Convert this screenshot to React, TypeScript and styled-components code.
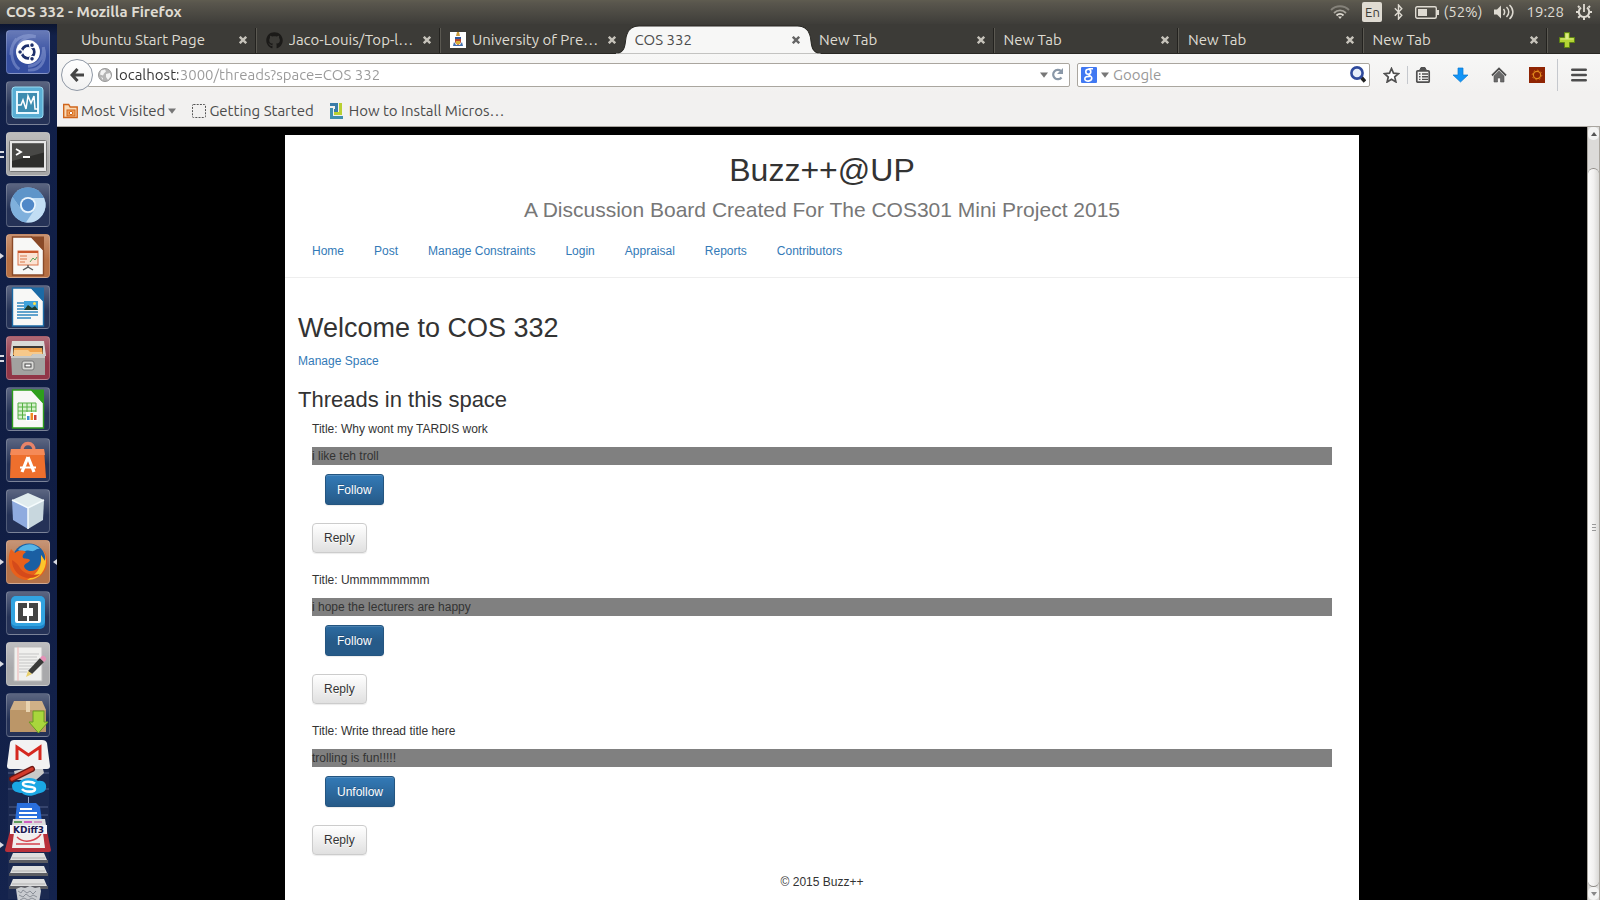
import React from "react";
import styled, { createGlobalStyle, css } from "styled-components";
import { FaGithub } from "react-icons/fa";

const GlobalStyle = createGlobalStyle`
  * { box-sizing: border-box; }
  body { margin: 0; background: #000; }
  button, input { font-family: inherit; font-size: inherit; margin: 0; }
  svg { display: block; flex: none; }
`;

const Desktop = styled.div`
  height: 100vh;
  display: flex;
  flex-direction: column;
  overflow: hidden;
  font-family: "Ubuntu", "Noto Sans", sans-serif;
  font-size: 15px;
  line-height: 20px;
  color: #3c3c3c;
`;

/* ---------- system panel ---------- */

const Panel = styled.header`
  flex: none;
  height: 24px;
  display: flex;
  align-items: center;
  justify-content: space-between;
  padding: 0 8px 0 6px;
  background: linear-gradient(#5f5c50 0, #59564d 3px, #3e3d39 24px);
  color: #dfdbd2;
`;

const WindowTitle = styled.div`
  font-weight: 700;
`;

const Indicators = styled.div`
  display: flex;
  align-items: center;
`;

const Indicator = styled.div`
  display: flex;
  align-items: center;
  gap: 4px;
  margin-left: 12px;
`;

const Language = styled.span`
  width: 20px;
  height: 20px;
  border-radius: 2px;
  background: #dfdbd2;
  color: #3c3b37;
  font-size: 13px;
  text-align: center;
`;

const Workspace = styled.div`
  flex: 1;
  min-height: 0;
  display: flex;
`;

/* ---------- launcher ---------- */

const Launcher = styled.aside`
  flex: none;
  width: 57px;
  padding: 6px 7px 0 6px;
  overflow: hidden;
  display: flex;
  flex-direction: column;
  gap: 7px;
  background: linear-gradient(#0b1530 0, #12214a 12px, #101d43 50%, #14234d 100%);
`;

const Tile = styled.button<{ $bg?: string }>`
  position: relative;
  flex: none;
  width: 44px;
  height: 44px;
  padding: 0;
  display: flex;
  align-items: center;
  justify-content: center;
  border: 1px solid rgba(255, 255, 255, 0.2);
  border-radius: 4px;
  background: linear-gradient(rgba(255, 255, 255, 0.28), rgba(255, 255, 255, 0.04) 60%),
    ${(p) => p.$bg ?? "#1c2a50"};
`;

const Marker = styled.span<{ $kind: "one" | "two" | "focus" }>`
  position: absolute;
  top: 18px;
  ${(p) =>
    p.$kind === "one" &&
    css`
      left: -7px;
      border: 3px solid transparent;
      border-left: 4px solid #d8dae2;
      border-right: 0;
    `}
  ${(p) =>
    p.$kind === "two" &&
    css`
      left: -7px;
      width: 4px;
      height: 7px;
      border-top: 2px solid #d8dae2;
      border-bottom: 2px solid #d8dae2;
    `}
  ${(p) =>
    p.$kind === "focus" &&
    css`
      right: -8px;
      border: 3px solid transparent;
      border-right: 4px solid #d8dae2;
      border-left: 0;
    `}
`;

const FoldedStack = styled.div`
  flex: none;
  margin: -5px -6px 0 -6px;
`;

/* ---------- browser chrome ---------- */

const Browser = styled.div`
  flex: 1;
  min-width: 0;
  display: flex;
  flex-direction: column;
`;

const TabStrip = styled.div`
  flex: none;
  height: 30px;
  display: flex;
  padding-left: 15px;
  background: #3c3b37;
  box-shadow: inset 0 -1px 0 #282723;
`;

const Tab = styled.div<{ $active?: boolean; $line?: boolean }>`
  position: relative;
  flex: 1;
  min-width: 0;
  display: flex;
  align-items: center;
  gap: 6px;
  padding: 2px 10px 0 9px;
  color: ${(p) => (p.$active ? "#4c4c4c" : "#dfdbd2")};
  z-index: ${(p) => (p.$active ? 1 : 0)};
  ${(p) =>
    p.$line &&
    css`
      &::after {
        content: "";
        position: absolute;
        top: 4px;
        bottom: 1px;
        right: 0;
        width: 2px;
        background: linear-gradient(90deg, #23221f 50%, #5b5952 50%);
      }
    `}
`;

const ActiveShape = styled.svg`
  position: absolute;
  top: 0;
  left: -11px;
  width: calc(100% + 22px);
  height: 30px;
`;

const TabLabel = styled.span`
  position: relative;
  flex: 1;
  white-space: nowrap;
  overflow: hidden;
`;

const TabClose = styled.button`
  position: relative;
  padding: 0;
  border: 0;
  background: none;
  color: inherit;
`;

const NewTab = styled.button`
  flex: none;
  width: 52px;
  padding: 2px 0 0 11px;
  border: 0;
  background: none;
`;

const Toolbar = styled.div`
  flex: none;
  height: 38px;
  display: flex;
  align-items: center;
  padding: 3px 13px 0 4px;
  background: linear-gradient(#f7f7f6, #f2f1f0);
`;

const BackButton = styled.button`
  position: relative;
  z-index: 1;
  flex: none;
  width: 32px;
  height: 32px;
  padding: 0;
  display: flex;
  align-items: center;
  justify-content: center;
  border: 1px solid #8f98a5;
  border-radius: 50%;
  background: linear-gradient(#fff, #f1f1f1);
`;

const Field = styled.div<{ $search?: boolean }>`
  height: 24px;
  min-width: 0;
  display: flex;
  align-items: center;
  border: 1px solid #aaa69f;
  background: #fff;
  ${(p) =>
    p.$search
      ? css`
          flex: 0 1 293px;
          margin-left: 7px;
          padding: 0 3px;
          border-radius: 2px;
          gap: 4px;
        `
      : css`
          flex: 1;
          margin-left: -5px;
          padding: 0 4px 0 9px;
          border-radius: 0 2px 2px 0;
          gap: 3px;
        `}
`;

const Address = styled.input`
  flex: 1;
  min-width: 0;
  padding: 0;
  border: 0;
  outline: 0;
  color: transparent;
  background: linear-gradient(90deg, #333 63px, #999 63px);
  background-clip: text;
  -webkit-background-clip: text;
`;

const SearchInput = styled.input`
  flex: 1;
  min-width: 0;
  padding: 0;
  border: 0;
  outline: 0;
  background: none;
  &::placeholder {
    color: #999;
    opacity: 1;
  }
`;

const IconButton = styled.button`
  flex: none;
  padding: 0;
  border: 0;
  background: none;
`;

const ToolIcons = styled.div`
  flex: none;
  display: flex;
  align-items: center;
  gap: 22px;
  margin-left: 7px;
`;

const BookmarkPair = styled.div`
  display: flex;
  align-items: center;
  gap: 7px;
  margin-left: 6px;
`;

const Divider = styled.span`
  width: 1px;
  height: 18px;
  background: #c5c8cd;
`;

const MenuArea = styled.div`
  display: flex;
  align-items: center;
  gap: 13px;
  margin-left: -10px;
`;

const TallDivider = styled(Divider)`
  height: 32px;
`;

const BookmarksBar = styled.nav`
  flex: none;
  height: 35px;
  display: flex;
  align-items: center;
  padding: 4px 6px 0;
  gap: 16px;
  background: #f2f1f0;
  border-bottom: 1px solid #a9a59f;
`;

const Bookmark = styled.a`
  display: flex;
  align-items: center;
  gap: 3px;
  color: #4c4c4c;
  text-decoration: none;
  white-space: nowrap;
`;

/* ---------- web page ---------- */

const Viewport = styled.div`
  flex: 1;
  min-height: 0;
  display: flex;
  background: #000;
`;

const Canvas = styled.div`
  flex: 1;
  min-width: 0;
  overflow: hidden;
  padding: 8px 16px 0;
`;

const Site = styled.div`
  max-width: 1074px;
  min-height: 100%;
  margin: 0 auto;
  background: #fff;
  color: #333;
  font-family: "Liberation Sans", Arial, sans-serif;
  font-size: 12px;
  line-height: 18px;
`;

const SiteHeader = styled.header`
  padding: 17px 13px 8px;
  border-bottom: 1px solid #eee;
`;

const Brand = styled.h1`
  margin: 0;
  font-size: 32px;
  line-height: 36px;
  font-weight: 400;
  text-align: center;
`;

const Tagline = styled.p`
  margin: 10px 0 11px;
  font-size: 21px;
  line-height: 24px;
  color: #777;
  text-align: center;
`;

const SiteNav = styled.nav`
  display: flex;
  gap: 2px;
`;

const NavLink = styled.a`
  padding: 9px 14px;
  color: #337ab7;
  text-decoration: none;
`;

const SiteMain = styled.main`
  padding: 35px 13px 0;
`;

const SpaceTitle = styled.h2`
  margin: 0 0 8px;
  font-size: 27px;
  line-height: 31px;
  font-weight: 400;
`;

const ManageLink = styled.a`
  display: block;
  color: #337ab7;
  text-decoration: none;
`;

const ThreadsTitle = styled.h3`
  margin: 18px 0 8px;
  font-size: 22px;
  line-height: 24px;
  font-weight: 400;
`;

const Thread = styled.article`
  display: flex;
  flex-direction: column;
  align-items: flex-start;
  padding: 0 14px;
  margin-bottom: 18px;
`;

const ThreadName = styled.p`
  margin: 0 0 9px;
`;

const ThreadBody = styled.p`
  align-self: stretch;
  margin: 0 0 9px;
  background: #808080;
`;

const FollowButton = styled.button<{ $hot?: boolean }>`
  height: 31px;
  margin: 0 0 18px 13px;
  padding: 0 11px;
  border: 1px solid #245580;
  border-radius: 3px;
  color: #fff;
  background: ${(p) =>
    p.$hot ? "linear-gradient(#2d6ca2, #265a88 55%)" : "linear-gradient(#337ab7, #265a88)"};
  text-shadow: 0 -1px 0 rgba(0, 0, 0, 0.2);
  box-shadow: inset 0 1px 0 rgba(255, 255, 255, 0.15), 0 1px 1px rgba(0, 0, 0, 0.08);
`;

const ReplyButton = styled.button`
  height: 30px;
  padding: 0 11px;
  border: 1px solid #ccc;
  border-radius: 4px;
  color: #333;
  background: linear-gradient(#fff, #e0e0e0);
  text-shadow: 0 1px 0 #fff;
  box-shadow: inset 0 1px 0 rgba(255, 255, 255, 0.15), 0 1px 1px rgba(0, 0, 0, 0.08);
`;

const SiteFooter = styled.footer`
  text-align: center;
`;

const Scrollbar = styled.div`
  flex: none;
  width: 13px;
  display: flex;
  flex-direction: column;
  background: #dcdbd9;
  border: solid #aaa69f;
  border-width: 0 1px;
`;

const ScrollStep = styled.button`
  flex: none;
  height: 13px;
  padding: 0;
  display: flex;
  align-items: center;
  justify-content: center;
  border: 0;
  border-radius: 5px;
  background: #f4f4f3;
`;

const ScrollThumb = styled.div`
  flex: 1;
  margin-top: 28px;
  display: flex;
  align-items: center;
  justify-content: center;
  border: solid #8e8b86;
  border-width: 1px 0;
  border-radius: 6px;
  background: linear-gradient(90deg, #fbfbfa, #f2f1f0 50%, #d9d8d5);
`;

/* ---------- drawings ---------- */

const Cross = () => (
  <svg width="8" height="8" viewBox="0 0 8 8" stroke="currentColor" strokeWidth="2.4" opacity=".85">
    <path d="M.8.8l6.4 6.4M7.2.8L.8 7.2" />
  </svg>
);

const Down = ({ color = "#777" }: { color?: string }) => (
  <svg width="8" height="6" viewBox="0 0 8 6">
    <path d="M0 .5h8L4 5.8z" fill={color} />
  </svg>
);

const DocPage = ({ color, children }: { color: string; children: React.ReactNode }) => (
  <svg width="44" height="44" viewBox="0 0 44 44">
    <path d="M6.500 3h19L37.500 16v25h-31z" fill="#f8f8f6" stroke={color} strokeWidth="1.400" />
    <path d="M24.500 2.500H38V17z" fill={color} />
    {children}
  </svg>
);

const DashIcon = () => (
  <svg width="42" height="42" viewBox="0 0 44 44">
    <path d="M4 25C4 8 18 2 30 6c-11-1-20 6-19 17M22 41C37 42 42 28 38 17c1 12-6 19-16 20M10 8C2 18 4 34 13 40" fill="none" stroke="#a9b9e6" strokeWidth="3" opacity=".4" />
    <circle cx="22" cy="22" r="12.500" fill="#fff" />
    <circle cx="22" cy="22" r="6.500" fill="none" stroke="#1d2f6b" strokeWidth="3" />
    <g stroke="#fff" strokeWidth="1.300">
      <path d="M22 22h-9M22 22l4.500-8M22 22l4.500 8" strokeWidth="1" />
      <circle cx="13.700" cy="22" r="2.500" fill="#1d2f6b" />
      <circle cx="26.200" cy="14.800" r="2.500" fill="#1d2f6b" />
      <circle cx="26.200" cy="29.200" r="2.500" fill="#1d2f6b" />
    </g>
    <circle cx="22" cy="22" r="5" fill="#fff" />
  </svg>
);

const MonitorIcon = () => (
  <svg width="44" height="44" viewBox="0 0 44 44">
    <rect x="6" y="6" width="31" height="31" rx="3" fill="#5aaed4" stroke="#9bdcf3" />
    <rect x="11" y="11" width="21" height="21" fill="#3d8cb0" stroke="#e8f8ff" strokeWidth="2" />
    <path d="M12 24h3l2-5 3 9 2-13 3 7 3-7 1 13h3" fill="none" stroke="#fff" strokeWidth="1.500" />
  </svg>
);

const TerminalIcon = () => (
  <svg width="44" height="44" viewBox="0 0 44 44">
    <rect x="3.500" y="8.500" width="37" height="31" rx="1" fill="#e6e6e6" stroke="#777" />
    <rect x="6" y="11.500" width="32" height="24" fill="#2d2d2b" />
    <path d="M6 11.500h32v9L6 29z" fill="#484846" />
    <path d="M10 17l5 3-5 3M17 25h7" fill="none" stroke="#fff" strokeWidth="1.800" />
  </svg>
);

const ChromiumIcon = () => (
  <svg width="44" height="44" viewBox="0 0 44 44">
    <circle cx="22" cy="22" r="17.500" fill="#9fc6e8" />
    <path d="M6.500 14A17.500 17.500 0 0 1 38 15H22a8 8 0 0 0-7.600 10z" fill="#5e95c9" />
    <path d="M6.500 14A17.500 17.500 0 0 0 20 39.400L27 28.500a8 8 0 0 1-12.400-3z" fill="#7fb0dc" />
    <path d="M38 15a17.500 17.500 0 0 1-18 24.400L28.500 27A8 8 0 0 0 24 15z" fill="#c2def4" />
    <circle cx="22" cy="22" r="8" fill="#eaf5fd" />
    <circle cx="22" cy="22" r="6.200" fill="#5088c8" />
  </svg>
);

const ImpressIcon = () => (
  <DocPage color="#8a4a28">
    <rect x="12" y="17" width="20" height="14" fill="#fbe3d3" stroke="#d9744a" />
    <path d="M12 18h20" stroke="#c9572c" strokeWidth="2" />
    <path d="M14 22h7M14 25h7M14 28h5" stroke="#e59a76" strokeWidth="1.600" />
    <path d="M24 28l3-4 2 2 2-3" fill="none" stroke="#5aa35a" />
    <path d="M22 31v2l-5 3M22 33l5 3" fill="none" stroke="#555" strokeWidth="1.400" />
  </DocPage>
);

const WriterIcon = () => (
  <DocPage color="#1b6aa5">
    <path d="M11 18h7M11 21h7M11 24h7M11 27h21M11 30h21M11 33h14" stroke="#2f86c0" strokeWidth="1.600" />
    <rect x="18" y="16" width="14" height="9" fill="#3fa3dc" />
    <path d="M18 25l4-5 4 3 3-2 3 4z" fill="#1f3d2c" />
    <circle cx="28.500" cy="18.500" r="1.500" fill="#ffe14d" />
  </DocPage>
);

const FilesIcon = () => (
  <svg width="44" height="44" viewBox="0 0 44 44">
    <path d="M6 5h32l2 15H4z" fill="#d9d9d6" />
    <path d="M7 10h30v10H7z" fill="#3d3936" />
    <path d="M8 12h28l1 7H7z" fill="#f0a24c" />
    <path d="M8 14h14l2 2h12v4H8z" fill="#f7c98b" />
    <path d="M5 20h20l2-2h12v21H6z" fill="#a2a2a0" />
    <path d="M5 20h20l2-2h12v4H5z" fill="#c9c9c6" />
    <rect x="16" y="25" width="12" height="9" rx="2" fill="#d9d9d6" stroke="#777" />
    <rect x="19" y="28" width="6" height="3" fill="#fff" stroke="#444" />
  </svg>
);

const CalcIcon = () => (
  <DocPage color="#2e9e1c">
    <path d="M12 16h18v16H12z" fill="#d7f0ce" />
    <path d="M12 16h18v16H12zM12 20h18M12 24h18M12 28h18M16.500 16v16M21 16v16M25.500 16v16" fill="none" stroke="#55b043" />
    <path d="M20 25h12v9H20z" fill="#fff" />
    <path d="M21 29h2.500v4H21z" fill="#3c8fd0" />
    <path d="M24.500 26H27v7h-2.500z" fill="#f08a24" />
    <path d="M28 28h2.500v5H28z" fill="#c9443a" />
  </DocPage>
);

const SoftwareIcon = () => (
  <svg width="44" height="44" viewBox="0 0 44 44">
    <path d="M16 13c-1-10 13-10 12 0" fill="none" stroke="#e88368" strokeWidth="3.500" />
    <path d="M5 11h33l2 29H4z" fill="#ee6f2d" />
    <path d="M5 11h33l1 6H4z" fill="#f58a58" />
    <path d="M22 19l-6 15M22 19l6 15" stroke="#fff" strokeWidth="3.200" />
    <path d="M14 29.500h16" stroke="#fff" strokeWidth="2" />
  </svg>
);

const CubeIcon = () => (
  <svg width="44" height="44" viewBox="0 0 44 44">
    <path d="M22 4l16 7-16 8-16-8z" fill="#e1ecee" />
    <path d="M6 11l16 8v21L7 31z" fill="#8fabdf" />
    <path d="M38 11l-16 8v21l15-9z" fill="#c8d7de" />
    <path d="M6 11l16 8 16-8M22 19v21" fill="none" stroke="#f5fbfd" strokeWidth="1.500" />
  </svg>
);

const FirefoxIcon = () => (
  <svg width="44" height="44" viewBox="0 0 44 44">
    <circle cx="23" cy="20" r="16.500" fill="#1a5fa3" />
    <path d="M12 10c5-7 16-8 22-1-4-1-5 3-9 2-4-2-8 2-13-1z" fill="#56b4e6" />
    <path d="M5 9l4 4c4-3 7-3 11-1-3 2-4 4-3 6 2 1 5 0 7 2-1 3-5 3-6 6 1 5 7 6 11 4 5-3 7-9 6-15l4 6c1-4 0-8-2-12 7 9 5 22-4 28-10 6-23 3-28-7C2 23 2 15 5 9z" fill="#e8601c" />
    <path d="M37 9c5 9 4 20-4 27-4 3-8 4-12 4 9-5 14-12 14-20l0-5 4 6c1-4 0-8-2-12z" fill="#fbc52c" />
    <path d="M6 20c0 10 7 18 18 18 4 0 8-2 10-4-8 2-16 0-20-6-2-4-5-6-8-8z" fill="#d54a1a" />
  </svg>
);

const BracketsIcon = () => (
  <svg width="44" height="44" viewBox="0 0 44 44">
    <rect x="5" y="5" width="34" height="33" rx="5" fill="#1d84c9" />
    <rect x="5" y="5" width="34" height="30" rx="5" fill="#32a3e0" />
    <rect x="9" y="10" width="26" height="22" rx="2" fill="#fff" />
    <path d="M12 12h9v5h-4v8h4v5h-9zM32 12h-9v5h4v8h-4v5h9z" fill="#444" />
  </svg>
);

const EditorIcon = () => (
  <svg width="44" height="44" viewBox="0 0 44 44">
    <path d="M8 5h28v34H8z" fill="#f0f0ee" stroke="#bbb" />
    <path d="M12 5v34" stroke="#efb3b3" />
    <path d="M13 12h20M13 15h18M13 18h20M13 21h17M13 24h14M13 27h16M13 30h8" stroke="#c5c5c5" />
    <path d="M22 29L34 16l4 4-12 12z" fill="#3a3a38" />
    <path d="M34 16l2-2c2-1 5 2 4 4l-2 2z" fill="#e792b8" />
    <path d="M22 29l4 3-6 3z" fill="#e9cf6a" />
  </svg>
);

const ArchiveIcon = () => (
  <svg width="44" height="44" viewBox="0 0 44 44">
    <path d="M8 8h28l4 9H4z" fill="#cfb087" />
    <path d="M4 17h36v22H4z" fill="#bb9668" />
    <path d="M20 8h4v11h-4z" fill="#e8d3b0" />
    <path d="M27 18h11v11h4L32.500 40 23 29h4z" fill="#a9d63c" stroke="#6b9c22" />
  </svg>
);

const StackArt = () => (
  <svg width="57" height="164" viewBox="0 0 57 164">
    <path d="M8 30h41v130H8z" fill="#1b2950" />
    <path d="M8 34h41M8 50h41M9 68h39M9 76h39" stroke="#526089" />
    <path d="M14 32l28-6 2 8-8 7H16z" fill="#c9c9c9" />
    <path d="M10 4c0-2 2-3 4-3h28c3 0 4 1 5 3l3 23c0 2-1 3-3 3H10c-2 0-3-1-3-3z" fill="#f2f2f2" />
    <path d="M17 21V8l11.500 8L40 8v13" fill="none" stroke="#d5281f" strokeWidth="3" />
    <path d="M12 40l20-10" stroke="#6d1712" strokeWidth="6" strokeLinecap="round" />
    <path d="M12 40l20-10" stroke="#d23a2a" strokeWidth="3.500" strokeLinecap="round" />
    <path d="M12 47c0-4 5-5 7-4 5-5 15-5 19-1 6-1 9 3 8 7 0 4-6 5-9 6-6 3-12 2-15-1-5 0-10-2-10-7z" fill="#1aa7e4" />
    <path d="M35 44.500c-3-2.500-12-2.500-12 .5 0 4 12 1.500 12 5 0 3.500-10 3.500-13 0" fill="none" stroke="#fff" strokeWidth="2.600" />
    <path d="M28.500 58v10" stroke="#9aa7c8" />
    <path d="M17 64h19l4 4 2 15H15z" fill="#2a6fdd" />
    <path d="M20 70h12M19 74h18M19 78h18" stroke="#fff" strokeWidth="1.800" />
    <path d="M13 80h32l1 6H12z" fill="#ddd" />
    <path d="M14 83h8" stroke="#5d9c5d" strokeWidth="2" />
    <path d="M24 83h8" stroke="#d060c0" strokeWidth="2" />
    <path d="M34 83h8" stroke="#d09ac0" strokeWidth="2" />
    <path d="M10 92h37l4 19c0 2-2 2-3 2H8c-1 0-3 0-3-2z" fill="#b8303a" />
    <path d="M14 94h29l2 15H12z" fill="#f1efee" />
    <path d="M17 98c8 8 20 3 24-3M16 105h24" fill="none" stroke="#d4424c" strokeWidth="1.400" />
    <path d="M10 86h37v9H10z" fill="#f5f3f8" />
    <text x="28.500" y="94" textAnchor="middle" fontFamily="DejaVu Sans, sans-serif" fontSize="9" fontWeight="700" fill="#1c1850">KDiff3</text>
    <path d="M0 103l4 3-4 3z" fill="#d8dae2" />
    {[114, 127, 140].map((y) => (
      <g key={y}>
        <path d={`M13 ${y}h31l3 7H10z`} fill="#dedede" />
        <path d={`M9 ${y + 7}h39v3H9z`} fill="#5c5d63" />
        <path d={`M12 ${y + 5}h33`} stroke="#b0b0b0" />
      </g>
    ))}
    <path d="M16 150l5-2 4 1 5-2 5 2 5-1 1 4-2 12H18z" fill="#c9ccd0" />
    <path d="M18 152l3 2 2-3 4 3 3-2 3 3 3-3M19 156l4 2 3-3 4 3 3-2 4 2M20 161l4-2 4 2 4-2 4 2" fill="none" stroke="#8b9098" />
  </svg>
);

type AppTile = {
  name: string;
  icon: React.ReactNode;
  bg?: string;
  mark?: "one" | "two";
  focus?: boolean;
};

const apps: AppTile[] = [
  { name: "Search", icon: <DashIcon />, bg: "#2d479c" },
  { name: "System Monitor", icon: <MonitorIcon /> },
  { name: "Terminal", icon: <TerminalIcon />, bg: "#a3a3a3", mark: "two" },
  { name: "Chromium", icon: <ChromiumIcon /> },
  { name: "Impress", icon: <ImpressIcon />, bg: "#b3693b", mark: "one" },
  { name: "Writer", icon: <WriterIcon /> },
  { name: "Files", icon: <FilesIcon />, bg: "#8d2e40", mark: "two" },
  { name: "Calc", icon: <CalcIcon /> },
  { name: "Software Centre", icon: <SoftwareIcon /> },
  { name: "NetBeans", icon: <CubeIcon /> },
  { name: "Firefox", icon: <FirefoxIcon />, bg: "#b06c42", mark: "one", focus: true },
  { name: "Brackets", icon: <BracketsIcon /> },
  { name: "Text Editor", icon: <EditorIcon />, bg: "#a5a5a8", mark: "one" },
  { name: "Package Installer", icon: <ArchiveIcon /> },
];

const CrestIcon = () => (
  <svg width="16" height="16" viewBox="0 0 16 16">
    <path d="M0 0h16v16H0z" fill="#fff" />
    <path d="M7 0h2l1 4H6z" fill="#c99a3c" />
    <path d="M5 5h6v4c0 2-1 3-3 4-2-1-3-2-3-4z" fill="#b5482e" />
    <path d="M5 5h6v2H5z" fill="#31569b" />
    <path d="M4 10l-1 4h10l-1-4-2 3H6z" fill="#3f6fae" />
    <path d="M6 9h4v3H6z" fill="#d9b23a" />
  </svg>
);

const tabs = [
  { label: "Ubuntu Start Page" },
  { label: "Jaco-Louis/Top-l…", icon: <FaGithub size={17} color="#1b1a18" /> },
  { label: "University of Pre…", icon: <CrestIcon /> },
  { label: "COS 332", active: true },
  { label: "New Tab" },
  { label: "New Tab" },
  { label: "New Tab" },
  { label: "New Tab" },
];

const navLinks = ["Home", "Post", "Manage Constraints", "Login", "Appraisal", "Reports", "Contributors"];

const threads = [
  { title: "Why wont my TARDIS work", body: "i like teh troll", action: "Follow" },
  { title: "Ummmmmmmm", body: "i hope the lecturers are happy", action: "Follow", hot: true },
  { title: "Write thread title here", body: "trolling is fun!!!!!", action: "Unfollow" },
];

function SystemPanel() {
  return (
    <Panel>
      <WindowTitle>COS 332 - Mozilla Firefox</WindowTitle>
      <Indicators>
        <Indicator>
          <svg width="20" height="14" viewBox="0 0 20 14" fill="none" strokeWidth="1.800">
            <path d="M1 5c5-5 13-5 18 0" stroke="#85827a" />
            <path d="M4 8c3.500-3.500 8.500-3.500 12 0" stroke="#a8a59c" />
            <path d="M6.500 10.500c2-2 5-2 7 0" stroke="#dfdbd2" />
            <path d="M8 11.500h4l-2 2.500z" fill="#dfdbd2" />
          </svg>
        </Indicator>
        <Indicator>
          <Language>En</Language>
        </Indicator>
        <Indicator>
          <svg width="9" height="16" viewBox="0 0 9 16" fill="none" stroke="#dfdbd2" strokeWidth="1.400">
            <path d="M.8 4.200l7 7L4.500 15V1l3.300 3.800-7 7" />
          </svg>
        </Indicator>
        <Indicator>
          <svg width="24" height="13" viewBox="0 0 24 13">
            <rect x=".7" y=".7" width="20.600" height="11.600" rx="1.500" fill="none" stroke="#dfdbd2" strokeWidth="1.400" />
            <path d="M3 3h9v7H3zM22 4h2v5h-2z" fill="#dfdbd2" />
          </svg>
          <span>(52%)</span>
        </Indicator>
        <Indicator>
          <svg width="20" height="16" viewBox="0 0 20 16" fill="none" stroke="#dfdbd2" strokeWidth="1.500">
            <path d="M0 5.500h3l4-4v13l-4-4H0z" fill="#dfdbd2" stroke="none" />
            <path d="M9.500 5c1.500 2 1.500 4 0 6M12.500 3c3 3 3 7 0 10M15.500 1c4.500 4 4.500 10 0 14" />
          </svg>
        </Indicator>
        <Indicator>
          <span>19:28</span>
        </Indicator>
        <Indicator>
          <svg width="16" height="16" viewBox="0 0 16 16" fill="none" stroke="#dfdbd2">
            <path d="M5 3.600a5.200 5.200 0 1 0 6 0" strokeWidth="2" />
            <path d="M8 0v8" strokeWidth="1.800" />
            <path d="M3.500 3.500L2 2M12.500 3.500L14 2M2.500 8H0M13.500 8H16M4 12l-1.800 1.800M12 12l1.800 1.800M8 13.500V16" strokeWidth="2" />
          </svg>
        </Indicator>
      </Indicators>
    </Panel>
  );
}

function Tabs() {
  return (
    <TabStrip>
      {tabs.map((t, i) => (
        <Tab key={i} $active={t.active} $line={!t.active && !tabs[i + 1]?.active}>
          {t.active && (
            <ActiveShape viewBox="0 0 206 30" preserveAspectRatio="none">
              <path d="M0 30C13 29 9 16 12 10c2-6 6-8 12-8h158c6 0 10 2 12 8 3 6-1 19 12 20z" fill="#f7f7f6" stroke="#282723" />
              <path d="M1 29.500h204V31H1z" fill="#f7f7f6" />
            </ActiveShape>
          )}
          {t.icon}
          <TabLabel>{t.label}</TabLabel>
          <TabClose aria-label="Close tab">
            <Cross />
          </TabClose>
        </Tab>
      ))}
      <NewTab aria-label="Open a new tab">
        <svg width="16" height="16" viewBox="0 0 16 16">
          <path d="M5.500.5h5v5h5v5h-5v5h-5v-5h-5v-5h5z" fill="#b4d335" stroke="#5f8413" />
          <path d="M6.500 1.500h3v5h5v1h-13v-1h5z" fill="#dcec86" />
        </svg>
      </NewTab>
    </TabStrip>
  );
}

function NavigationBar() {
  return (
    <Toolbar>
      <BackButton aria-label="Back">
        <svg width="14" height="14" viewBox="0 0 14 14" fill="none" stroke="#454545" strokeWidth="3">
          <path d="M7.500 1L2 7l5.500 6M2 7h12" />
        </svg>
      </BackButton>
      <Field>
        <svg width="14" height="14" viewBox="0 0 14 14">
          <circle cx="7" cy="7" r="6.500" fill="#b5b5b5" stroke="#999" />
          <path d="M3 2.500l4-1 1 2-2 2-1 2-3-1zM8 6l4-1 1 3-3 4-2-3zM3 9l2 1v2z" fill="#f3f3f3" />
        </svg>
        <Address aria-label="Address" defaultValue="localhost:3000/threads?space=COS 332" />
        <Down />
        <IconButton aria-label="Reload">
          <svg width="14" height="13" viewBox="0 0 14 13">
            <path d="M10.500 9.500A4.700 4.700 0 1 1 10 3" fill="none" stroke="#8a98a8" strokeWidth="2.200" />
            <path d="M12 0v6H6z" fill="#8a98a8" />
          </svg>
        </IconButton>
      </Field>
      <Field as="form" $search>
        <svg width="16" height="16" viewBox="0 0 16 16">
          <rect width="16" height="16" rx="1" fill="#4078f2" />
          <g fill="none" stroke="#fff" strokeWidth="1.600">
            <circle cx="7.300" cy="4.800" r="2.500" />
            <path d="M12 1.800H7.500M8.500 7.300c-2 1.200 2.300 1.200 2.300 3.800 0 4-7 3.800-7 .8 0-2 2.500-2.600 5-2.500" />
          </g>
        </svg>
        <Down />
        <SearchInput aria-label="Search" placeholder="Google" />
        <IconButton type="button" aria-label="Go">
          <svg width="16" height="17" viewBox="0 0 16 17">
            <path d="M11 11l4 4.500" stroke="#222" strokeWidth="3.600" />
            <circle cx="7" cy="7" r="5.600" fill="#e8effa" stroke="#2f4a9c" strokeWidth="2.600" />
          </svg>
        </IconButton>
      </Field>
      <ToolIcons>
        <BookmarkPair>
          <IconButton aria-label="Bookmark this page">
            <svg width="17" height="16" viewBox="0 0 17 16">
              <path d="M8.500 1.500l2 4.600 5 .5-3.800 3.300 1.200 5-4.400-2.700L4.100 15l1.200-5L1.500 6.600l5-.5z" fill="#fff" stroke="#505050" strokeWidth="1.700" />
            </svg>
          </IconButton>
          <Divider />
          <IconButton aria-label="Bookmarks">
            <svg width="16" height="16" viewBox="0 0 16 16" fill="none" stroke="#505050">
              <rect x="1.800" y="3.800" width="12.400" height="11.400" rx="1" strokeWidth="1.700" />
              <path d="M4.500 3.500l1.500-3h4l1.500 3z" fill="#505050" />
              <path d="M4 7h1.500M7 7h6M4 9.700h1.500M7 9.700h6M4 12.400h1.500M7 12.400h6" strokeWidth="1.400" />
            </svg>
          </IconButton>
        </BookmarkPair>
        <IconButton aria-label="Downloads">
          <svg width="16" height="16" viewBox="0 0 16 16">
            <path d="M5 1h5v7h5l-7.500 7L0 8h5z" fill="#1294f6" stroke="#0b7ad0" strokeWidth=".7" />
          </svg>
        </IconButton>
        <IconButton aria-label="Home">
          <svg width="16" height="16" viewBox="0 0 16 16">
            <path d="M1 8.500l7-7 7 7" fill="none" stroke="#505050" strokeWidth="1.800" />
            <path d="M3 9l5-5 5 5v6H9.500v-4h-3v4H3z" fill="#6a6a6a" stroke="#505050" strokeWidth=".6" />
          </svg>
        </IconButton>
        <IconButton aria-label="Extension">
          <svg width="16" height="16" viewBox="0 0 16 16">
            <path d="M0 0h16v16H0z" fill="#8f2403" />
            <circle cx="8" cy="8" r="3.600" fill="none" stroke="#e08a1c" strokeWidth="1.200" />
            <circle cx="8" cy="8" r="4.800" fill="none" stroke="#d97a18" strokeDasharray="1.500 2.200" />
          </svg>
        </IconButton>
        <MenuArea>
          <TallDivider />
          <IconButton aria-label="Menu">
            <svg width="16" height="14" viewBox="0 0 16 14" stroke="#4d4d4d" strokeWidth="2.600" strokeLinecap="round">
              <path d="M1.300 1.800h13.400M1.300 7h13.400M1.300 12.200h13.400" />
            </svg>
          </IconButton>
        </MenuArea>
      </ToolIcons>
    </Toolbar>
  );
}

function Bookmarks() {
  return (
    <BookmarksBar>
      <Bookmark href="#">
        <svg width="15" height="16" viewBox="0 0 15 16" fill="none" stroke="#d0651b">
          <path d="M.7 14.500V1.500h5l1.500 2.500h7v10.500z" fill="#f9d9b4" strokeWidth="1.400" />
          <rect x="4" y="7" width="8" height="6" fill="#f1a35c" />
          <circle cx="8" cy="10" r="1.700" fill="#fff" />
        </svg>
        Most Visited
        <Down />
      </Bookmark>
      <Bookmark href="#">
        <svg width="14" height="14" viewBox="0 0 14 14">
          <rect x=".5" y=".5" width="13" height="13" rx="1" fill="none" stroke="#555" strokeDasharray="2 1.200" />
        </svg>
        Getting Started
      </Bookmark>
      <Bookmark href="#">
        <svg width="16" height="16" viewBox="0 0 16 16">
          <path d="M0 0h8v9H4V6h1V3H0z" fill="#3a7ca8" />
          <path d="M9 0h3v12H4V9h5z" fill="#b9d032" />
          <path d="M0 5h3v8h10v3H0z" fill="#3f8fae" />
        </svg>
        How to Install Micros…
      </Bookmark>
    </BookmarksBar>
  );
}

export default function App() {
  return (
    <Desktop>
      <GlobalStyle />
      <SystemPanel />
      <Workspace>
        <Launcher>
          {apps.map((a) => (
            <Tile key={a.name} $bg={a.bg} aria-label={a.name}>
              {a.icon}
              {a.mark && <Marker $kind={a.mark} />}
              {a.focus && <Marker $kind="focus" />}
            </Tile>
          ))}
          <FoldedStack>
            <StackArt />
          </FoldedStack>
        </Launcher>
        <Browser>
          <Tabs />
          <NavigationBar />
          <Bookmarks />
          <Viewport>
            <Canvas>
              <Site>
                <SiteHeader>
                  <Brand>Buzz++@UP</Brand>
                  <Tagline>A Discussion Board Created For The COS301 Mini Project 2015</Tagline>
                  <SiteNav>
                    {navLinks.map((l) => (
                      <NavLink key={l} href="#">{l}</NavLink>
                    ))}
                  </SiteNav>
                </SiteHeader>
                <SiteMain>
                  <SpaceTitle>Welcome to COS 332</SpaceTitle>
                  <ManageLink href="#">Manage Space</ManageLink>
                  <ThreadsTitle>Threads in this space</ThreadsTitle>
                  {threads.map((t) => (
                    <Thread key={t.title}>
                      <ThreadName>Title: {t.title}</ThreadName>
                      <ThreadBody>{t.body}</ThreadBody>
                      <FollowButton $hot={t.hot}>{t.action}</FollowButton>
                      <ReplyButton>Reply</ReplyButton>
                    </Thread>
                  ))}
                </SiteMain>
                <SiteFooter>© 2015 Buzz++</SiteFooter>
              </Site>
            </Canvas>
            <Scrollbar>
              <ScrollStep aria-label="Scroll up">
                <svg width="6" height="4" viewBox="0 0 6 4"><path d="M0 4h6L3 0z" fill="#555" /></svg>
              </ScrollStep>
              <ScrollThumb>
                <svg width="4" height="8" viewBox="0 0 4 8" stroke="#999"><path d="M0 .5h4M0 3.500h4M0 6.500h4" /></svg>
              </ScrollThumb>
              <ScrollStep aria-label="Scroll down">
                <svg width="6" height="4" viewBox="0 0 6 4"><path d="M0 0h6L3 4z" fill="#888" /></svg>
              </ScrollStep>
            </Scrollbar>
          </Viewport>
        </Browser>
      </Workspace>
    </Desktop>
  );
}
